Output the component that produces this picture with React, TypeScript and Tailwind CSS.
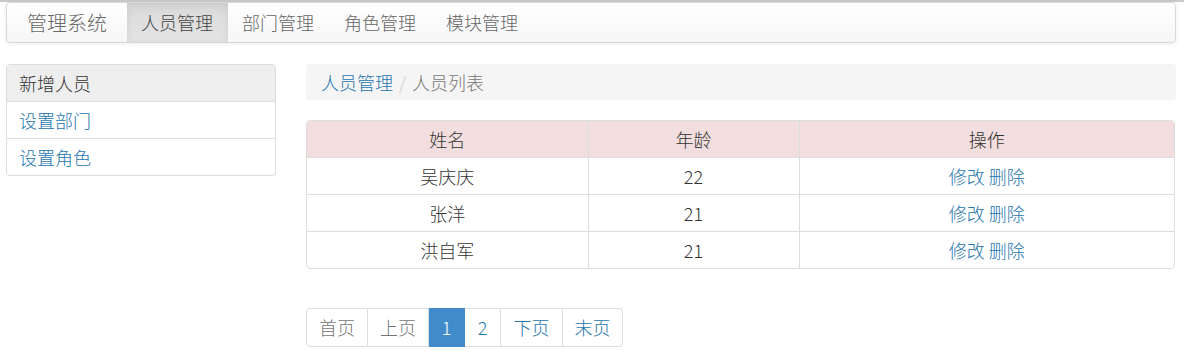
import React from 'react';

const font = { fontFamily: '"Noto Sans CJK SC", "Noto Sans", sans-serif' };

const navItems = ['人员管理', '部门管理', '角色管理', '模块管理'];
const sideItems = ['新增人员', '设置部门', '设置角色'];
const people = [
  { name: '吴庆庆', age: 22 },
  { name: '张洋', age: 21 },
  { name: '洪自军', age: 21 },
];
const pages = [
  { label: '首页', w: 'w-[62px]', state: 'disabled' },
  { label: '上页', w: 'w-[61px]', state: 'disabled' },
  { label: '1', w: 'w-[36px]', state: 'active' },
  { label: '2', w: 'w-[36px]', state: '' },
  { label: '下页', w: 'w-[62px]', state: '' },
  { label: '末页', w: 'w-[60px]', state: '' },
];

export default function App() {
  return (
    <div className="w-[1184px] h-[362px] bg-white overflow-hidden font-light" style={font}>
      <div className="h-[2px] bg-[#c9c9c9]" />

      {/* navbar */}
      <div className="ml-[6px] mr-[8px] h-[41px] flex items-stretch rounded-[4px] border border-[#d8d8d8] bg-gradient-to-b from-white to-[#f6f6f6] shadow-[0_1px_4px_rgba(0,0,0,0.08)] overflow-hidden">
        <div className="px-[20px] flex items-center text-[20px] text-[#666]">管理系统</div>
        {navItems.map((item, i) => (
          <div
            key={item}
            className={`px-[14px] flex items-center text-[18px] ${
              i === 0
                ? 'bg-gradient-to-b from-[#dadada] to-[#e4e4e4] shadow-[inset_0_3px_9px_rgba(0,0,0,0.07)] text-[#444]'
                : 'text-[#666]'
            } ${i === 0 ? 'w-[101px]' : 'w-[102px]'}`}
          >
            {item}
          </div>
        ))}
      </div>

      <div className="flex items-start ml-[6px] mt-[21px] gap-[30px]">
        {/* sidebar */}
        <div className="w-[270px] rounded-[4px] border border-[#ddd] overflow-hidden">
          {sideItems.map((item, i) => (
            <div
              key={item}
              className={`h-[36px] px-[12px] flex items-center text-[18px] leading-[20px] ${
                i > 0 ? 'border-t border-[#ddd] h-[37px] text-[#2676ad]' : 'bg-[#eee] text-[#333]'
              }`}
            >
              {item}
            </div>
          ))}
        </div>

        {/* main */}
        <div className="w-[870px]">
          <div className="h-[36px] px-[15px] flex items-center rounded-[4px] bg-[#f5f5f5] text-[18px] leading-[20px]">
            <span className="text-[#2676ad]">人员管理</span>
            <span className="px-[6px] text-[#ccc]">/</span>
            <span className="text-[#777]">人员列表</span>
          </div>

          <div className="mt-[20px] mr-[1px] rounded-[4px] border border-[#ddd] overflow-hidden">
            <table className="w-full border-collapse table-fixed text-[18px] leading-[20px] text-[#333]">
              <thead>
                <tr className="bg-[#f2dede]">
                  <th className="w-[281px] h-[36px] font-light border-r border-[#ddd]">姓名</th>
                  <th className="w-[211px] font-light border-r border-[#ddd]">年龄</th>
                  <th className="font-light">操作</th>
                </tr>
              </thead>
              <tbody>
                {people.map((p) => (
                  <tr key={p.name} className="border-t border-[#ddd]">
                    <td className="h-[37px] text-center border-r border-[#ddd]">{p.name}</td>
                    <td className="text-center border-r border-[#ddd]">{p.age}</td>
                    <td className="text-center text-[#2676ad]">
                      <span>修改</span> <span>删除</span>
                    </td>
                  </tr>
                ))}
              </tbody>
            </table>
          </div>

          <div className="mt-[39px] flex">
            {pages.map((pg, i) => (
              <div
                key={pg.label}
                className={`${pg.w} h-[39px] flex items-center justify-center text-[18px] border-y border-r ${
                  i === 0 ? 'border-l rounded-l-[4px]' : ''
                } ${i === pages.length - 1 ? 'rounded-r-[4px]' : ''} ${
                  pg.state === 'active'
                    ? 'bg-[#428bca] border-[#428bca] text-white'
                    : pg.state === 'disabled'
                    ? 'border-[#ddd] text-[#777] bg-white'
                    : 'border-[#ddd] text-[#2676ad] bg-white'
                }`}
              >
                {pg.label}
              </div>
            ))}
          </div>
        </div>
      </div>
    </div>
  );
}
